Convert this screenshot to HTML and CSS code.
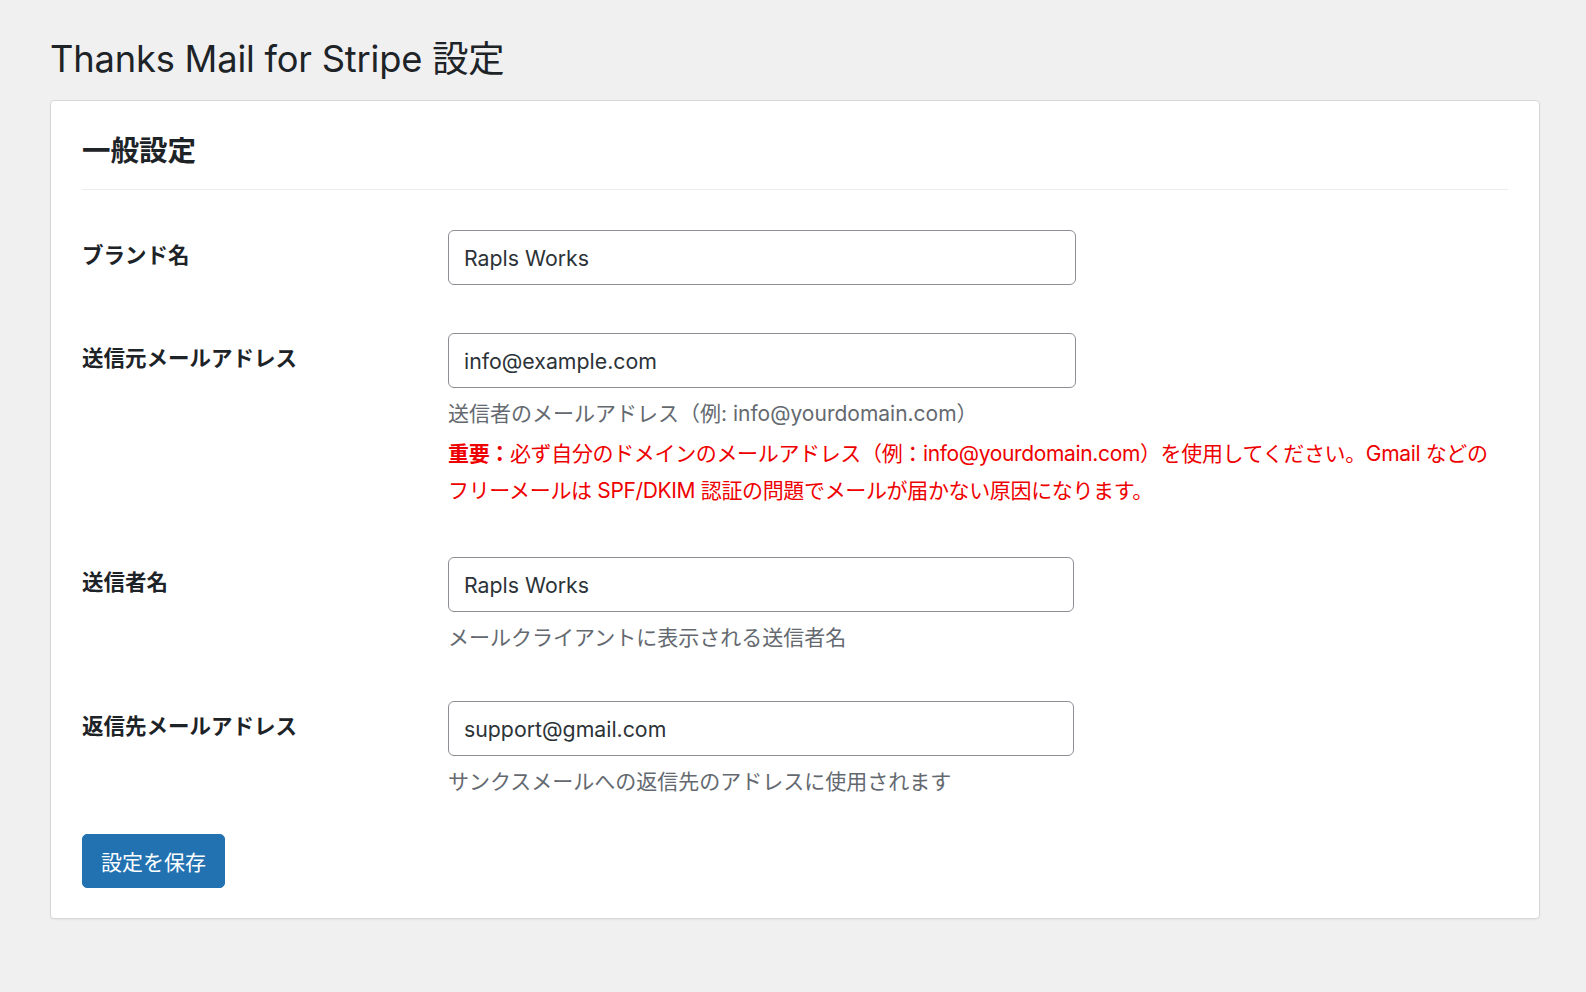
FILE: index.html
```html
<!DOCTYPE html>
<html lang="ja">
<head>
<meta charset="utf-8">
<title>Thanks Mail for Stripe 設定</title>
<link rel="stylesheet" href="styles.css">
</head>
<body>
<div class="wrap">
  <h1 class="page-title">Thanks Mail for Stripe 設定</h1>
  <div class="card">
    <h2 class="card-title">一般設定</h2>
    <form class="form">
      <div class="row">
        <label class="label" for="brand">ブランド名</label>
        <div class="field">
          <input class="input" id="brand" type="text" value="Rapls Works">
        </div>
      </div>
      <div class="row">
        <label class="label" for="from">送信元メールアドレス</label>
        <div class="field">
          <input class="input" id="from" type="text" value="info@example.com">
          <p class="desc">送信者のメールアドレス（例: info@yourdomain.com）</p>
          <p class="warn"><strong>重要：</strong>必ず自分のドメインのメールアドレス（例：info@yourdomain.com）を使用してください。Gmail などの<br>フリーメールは SPF/DKIM 認証の問題でメールが届かない原因になります。</p>
        </div>
      </div>
      <div class="row">
        <label class="label" for="name">送信者名</label>
        <div class="field">
          <input class="input narrow" id="name" type="text" value="Rapls Works">
          <p class="desc">メールクライアントに表示される送信者名</p>
        </div>
      </div>
      <div class="row">
        <label class="label" for="reply">返信先メールアドレス</label>
        <div class="field">
          <input class="input narrow" id="reply" type="text" value="support@gmail.com">
          <p class="desc">サンクスメールへの返信先のアドレスに使用されます</p>
        </div>
      </div>
      <div class="actions">
        <button class="button" type="button">設定を保存</button>
      </div>
    </form>
  </div>
</div>
</body>
</html>
```

FILE: styles.css
```css
html, body {
  margin: 0;
  padding: 0;
}
body {
  background: #f0f0f1;
  font-family: Inter, "Noto Sans CJK JP", sans-serif;
  color: #1d2327;
  width: 1586px;
  height: 992px;
  overflow: hidden;
}
.wrap {
  padding: 34px 46px 0 50px;
}
.page-title {
  margin: 0 0 16px;
  font-size: 36.3px;
  font-weight: 400;
  line-height: 50px;
  color: #1d2327;
  letter-spacing: -0.2px;
}
.card {
  background: #fff;
  border: 1px solid #d8d8da;
  border-radius: 4px;
  box-shadow: 0 1px 2px rgba(0,0,0,0.05);
  padding: 30px 31px 30px;
  width: 1426px;
}
.card-title {
  margin: 0;
  font-size: 28.5px;
  font-weight: 700;
  line-height: 40px;
  padding-bottom: 18px;
  border-bottom: 1px solid #ececec;
}
.form {
  padding-top: 16px;
}
.row {
  display: flex;
  padding: 24px 0;
}
.label {
  flex: 0 0 366px;
  font-size: 21.5px;
  font-weight: 700;
  line-height: 30px;
  padding-top: 10px;
}
.field {
  flex: 1;
  min-width: 0;
}
.input {
  display: block;
  box-sizing: border-box;
  width: 628px;
  height: 55px;
  border: 1.5px solid #8c8f94;
  border-radius: 6px;
  padding: 0 15px;
  font-family: Inter, "Noto Sans CJK JP", sans-serif;
  font-size: 21.3px;
  color: #2c3338;
  background: #fff;
  outline: none;
}
.input.narrow {
  width: 626px;
}
.desc {
  margin: 11px 0 0;
  font-size: 21px;
  line-height: 30px;
  color: #646970;
}
.warn {
  margin: 6px 0 0;
  font-size: 21px;
  line-height: 37px;
  letter-spacing: -0.35px;
  color: #ee0000;
  white-space: nowrap;
}
.warn strong {
  font-weight: 700;
}
.actions {
  padding-top: 13px;
}
.button {
  height: 54px;
  padding: 0 18px;
  background: #2271b1;
  color: #fff;
  border: 1px solid #2271b1;
  border-radius: 5px;
  font-family: Inter, "Noto Sans CJK JP", sans-serif;
  font-size: 21px;
  cursor: pointer;
}
```
